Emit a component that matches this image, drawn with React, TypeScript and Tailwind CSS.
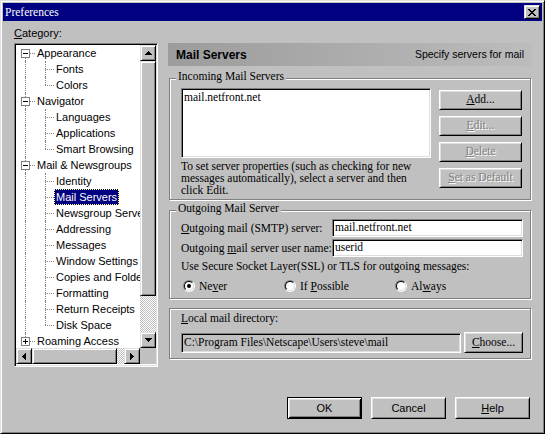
import React from 'react';

const sans = "font-['Liberation_Sans',Arial,sans-serif] text-[11px]";
const serif = "font-['Liberation_Serif','Times_New_Roman',serif] text-[11.5px]";

const raised =
    'border border-t-white border-l-white border-b-black border-r-black shadow-[inset_1px_1px_0_#dfdfdf,inset_-1px_-1px_0_#808080]';
const raisedDefault =
    'border border-black shadow-[inset_1px_1px_0_#fff,inset_-1px_-1px_0_#000,inset_2px_2px_0_#dfdfdf,inset_-2px_-2px_0_#808080]';
const sunken =
    'border border-t-[#808080] border-l-[#808080] border-b-white border-r-white shadow-[inset_1px_1px_0_#000,inset_-1px_-1px_0_#dfdfdf]';
const barBtn =
    'border border-t-[#dfdfdf] border-l-[#dfdfdf] border-b-black border-r-black shadow-[inset_1px_1px_0_#fff,inset_-1px_-1px_0_#808080]';

type Dir = 'up' | 'down' | 'left' | 'right';

function Arrow({ dir }: { dir: Dir }) {
    const vertical = dir === 'up' || dir === 'down';
    const rows = [1, 3, 5, 7];
    return (
        <svg width={vertical ? 7 : 4} height={vertical ? 4 : 7} shapeRendering="crispEdges">
            {rows.map((w, i) => {
                const off = (7 - w) / 2;
                if (dir === 'up') return <rect key={i} x={off} y={i} width={w} height={1} fill="#000" />;
                if (dir === 'down') return <rect key={i} x={off} y={3 - i} width={w} height={1} fill="#000" />;
                if (dir === 'left') return <rect key={i} x={i} y={off} width={1} height={w} fill="#000" />;
                return <rect key={i} x={3 - i} y={off} width={1} height={w} fill="#000" />;
            })}
        </svg>
    );
}

function ScrollButton({ dir }: { dir: Dir }) {
    return (
        <div className={`w-[16px] h-[16px] shrink-0 bg-[#c0c0c0] flex items-center justify-center ${barBtn}`}>
            <Arrow dir={dir} />
        </div>
    );
}

function Expander({ plus }: { plus?: boolean }) {
    return (
        <span className="w-[9px] h-[9px] border border-[#808080] bg-white flex items-center justify-center">
            <svg width="5" height="5" shapeRendering="crispEdges">
                <rect x="0" y="2" width="5" height="1" fill="#000" />
                {plus && <rect x="2" y="0" width="1" height="5" fill="#000" />}
            </svg>
        </span>
    );
}

type TreeItem = { label: string; root?: boolean; first?: boolean; last?: boolean; plus?: boolean; selected?: boolean };

const tree: TreeItem[] = [
    { label: 'Appearance', root: true, first: true },
    { label: 'Fonts' },
    { label: 'Colors', last: true },
    { label: 'Navigator', root: true },
    { label: 'Languages' },
    { label: 'Applications' },
    { label: 'Smart Browsing', last: true },
    { label: 'Mail & Newsgroups', root: true },
    { label: 'Identity' },
    { label: 'Mail Servers', selected: true },
    { label: 'Newsgroup Servers' },
    { label: 'Addressing' },
    { label: 'Messages' },
    { label: 'Window Settings' },
    { label: 'Copies and Folders' },
    { label: 'Formatting' },
    { label: 'Return Receipts' },
    { label: 'Disk Space', last: true },
    { label: 'Roaming Access', root: true, last: true, plus: true },
];

function TreeRow({ item }: { item: TreeItem }) {
    const label = item.selected ? (
        <div className="px-[1px] h-[16px] leading-[14px] whitespace-nowrap bg-[#000080] text-white border border-dotted border-[#ffff7f]">
            {item.label}
        </div>
    ) : (
        <div className="px-[2px] h-[16px] leading-[16px] whitespace-nowrap">{item.label}</div>
    );

    if (item.root) {
        return (
            <div className="h-[16px] flex">
                <div className="w-[19px] shrink-0 flex flex-col">
                    <div className={item.first ? 'h-[4px]' : 'ml-[9px] h-[4px] border-l border-dotted border-[#808080]'} />
                    <div className="h-[9px] flex items-center">
                        <div className="ml-[5px]">
                            <Expander plus={item.plus} />
                        </div>
                        <div className="w-[5px] border-t border-dotted border-[#808080]" />
                    </div>
                    <div className={item.last && item.plus ? 'flex-1' : 'ml-[9px] flex-1 border-l border-dotted border-[#808080]'} />
                </div>
                {label}
            </div>
        );
    }

    return (
        <div className="h-[16px] flex">
            <div className="w-[20px] shrink-0 pl-[9px]">
                <div className="h-full border-l border-dotted border-[#808080]" />
            </div>
            <div className="w-[18px] shrink-0 flex flex-col">
                <div className="ml-[9px] h-[8px] border-l border-dotted border-[#808080]" />
                <div className="ml-[9px] w-[9px] h-[1px] border-t border-dotted border-[#808080]" />
                <div className={item.last ? 'flex-1' : 'ml-[9px] flex-1 border-l border-dotted border-[#808080]'} />
            </div>
            {label}
        </div>
    );
}

function Button({
    children,
    className = '',
    disabled = false,
    isDefault = false,
}: {
    children: React.ReactNode;
    className?: string;
    disabled?: boolean;
    isDefault?: boolean;
}) {
    return (
        <button
            type="button"
            className={`bg-[#c0c0c0] flex items-center justify-center shrink-0 ${isDefault ? raisedDefault : raised} ${
                disabled ? 'text-[#808080] [text-shadow:1px_1px_0_#fff]' : 'text-black'
            } ${className}`}
        >
            {children}
        </button>
    );
}

function Radio({ checked }: { checked?: boolean }) {
    return (
        <span className="w-[12px] h-[12px] shrink-0 rounded-full border border-t-[#808080] border-l-[#808080] border-b-white border-r-white flex items-center justify-center">
            <span className="w-[10px] h-[10px] rounded-full border border-t-black border-l-black border-b-[#dfdfdf] border-r-[#dfdfdf] bg-white flex items-center justify-center">
                {checked && <span className="w-[4px] h-[4px] rounded-full bg-black" />}
            </span>
        </span>
    );
}

function Group({ label, className = '', children }: { label?: string; className?: string; children: React.ReactNode }) {
    return (
        <div className={`border border-[#808080] shadow-[inset_1px_1px_0_#fff,1px_1px_0_#fff] flex flex-col ${className}`}>
            {label && (
                <div className="-mt-[9px] ml-[6px] px-[2px] w-fit h-[12px] leading-[12px] bg-[#c0c0c0] whitespace-nowrap">
                    {label}
                </div>
            )}
            {children}
        </div>
    );
}

export default function App() {
    return (
        <div
            className={`w-[545px] h-[434px] bg-[#c0c0c0] p-[2px] flex flex-col text-black border border-t-[#dfdfdf] border-l-[#dfdfdf] border-b-black border-r-black shadow-[inset_1px_1px_0_#fff,inset_-1px_-1px_0_#808080] ${sans}`}
        >
            {/* Title bar */}
            <div className="h-[18px] shrink-0 bg-[#000080] flex items-center pl-[2px]">
                <span className={`text-white leading-[18px] ${serif}`}>Preferences</span>
                <div className={`ml-auto mr-[2px] w-[16px] h-[14px] bg-[#c0c0c0] flex items-center justify-center ${barBtn}`}>
                    <svg width="8" height="7" shapeRendering="crispEdges">
                        {[
                            [0, 0], [1, 0], [6, 0], [7, 0],
                            [1, 1], [2, 1], [5, 1], [6, 1],
                            [2, 2], [3, 2], [4, 2], [5, 2],
                            [3, 3], [4, 3],
                            [2, 4], [3, 4], [4, 4], [5, 4],
                            [1, 5], [2, 5], [5, 5], [6, 5],
                            [0, 6], [1, 6], [6, 6], [7, 6],
                        ].map(([x, y], i) => (
                            <rect key={i} x={x} y={y} width="1" height="1" fill="#000" />
                        ))}
                    </svg>
                </div>
            </div>

            <div className="flex pl-[11px]">
                {/* Left column: Category tree */}
                <div className="w-[144px] shrink-0 pt-[6px] flex flex-col">
                    <div className="h-[13px] leading-[13px]">
                        <u>C</u>ategory:
                    </div>
                    <div className={`mt-[3px] h-[324px] p-[1px] bg-white flex flex-col ${sunken}`}>
                        <div className="h-[303px] flex">
                            <div className="flex-1 overflow-hidden">
                                {tree.map((item) => (
                                    <TreeRow key={item.label} item={item} />
                                ))}
                            </div>
                            <div className="w-[16px] flex flex-col">
                                <ScrollButton dir="up" />
                                <div className={`h-[235px] shrink-0 bg-[#c0c0c0] ${barBtn}`} />
                                <div className="flex-1 bg-[repeating-conic-gradient(#fff_0_25%,#c0c0c0_0_50%)] bg-[length:2px_2px]" />
                                <ScrollButton dir="down" />
                            </div>
                        </div>
                        <div className="h-[16px] flex">
                            <div className="flex-1 flex">
                                <ScrollButton dir="left" />
                                <div className={`w-[85px] shrink-0 bg-[#c0c0c0] ${barBtn}`} />
                                <div className="flex-1 bg-[repeating-conic-gradient(#fff_0_25%,#c0c0c0_0_50%)] bg-[length:2px_2px]" />
                                <ScrollButton dir="right" />
                            </div>
                            <div className="w-[16px] bg-[#c0c0c0]" />
                        </div>
                    </div>
                </div>

                {/* Right column: Mail Servers panel */}
                <div className={`ml-[10px] w-[364px] pt-[22px] flex flex-col ${serif}`}>
                    <div className="h-[23px] flex items-center justify-between pl-[8px] pr-[8px] bg-linear-to-r from-[#9c9c9c] to-[#bcbcbc]">
                        <span className="font-['Liberation_Sans',Arial,sans-serif] text-[12px] font-bold">Mail Servers</span>
                        <span className="font-['Liberation_Sans',Arial,sans-serif] text-[10.5px]">Specify servers for mail</span>
                    </div>

                    <Group label="Incoming Mail Servers" className="mt-[12px] ml-[1px] w-[362px] pb-[3px]">
                        <div className="mt-[6px] pl-[11px] flex">
                            <div className="w-[250px] shrink-0 flex flex-col">
                                <div className={`h-[70px] bg-white pl-[2px] pt-[2px] leading-[12px] ${sunken}`}>
                                    mail.netfront.net
                                </div>
                                <div className="mt-[2px] leading-[12px] whitespace-nowrap">
                                    To set server properties (such as checking for new
                                    <br />
                                    messages automatically), select a server and then
                                    <br />
                                    click Edit.
                                </div>
                            </div>
                            <div className="ml-[8px] w-[83px] pt-[2px] flex flex-col gap-[6px]">
                                <Button className="h-[20px] w-[83px]">
                                    <span>
                                        <u>A</u>dd...
                                    </span>
                                </Button>
                                <Button className="h-[20px] w-[83px]" disabled>
                                    <span>
                                        <u>E</u>dit...
                                    </span>
                                </Button>
                                <Button className="h-[20px] w-[83px]" disabled>
                                    <span>
                                        <u>D</u>elete
                                    </span>
                                </Button>
                                <Button className="h-[20px] w-[83px]" disabled>
                                    <span>
                                        <u>S</u>et as Default
                                    </span>
                                </Button>
                            </div>
                        </div>
                    </Group>

                    <Group label="Outgoing Mail Server" className="mt-[10px] ml-[1px] w-[362px] pb-[6px]">
                        <div className="mt-[5px] pl-[11px] flex items-center h-[18px]">
                            <div className="w-[151px] leading-[12px] whitespace-nowrap">
                                <u>O</u>utgoing mail (SMTP) server:
                            </div>
                            <div className={`w-[191px] h-[18px] bg-white pl-[2px] leading-[14px] ${sunken}`}>mail.netfront.net</div>
                        </div>
                        <div className="mt-[2px] pl-[11px] flex items-center h-[18px]">
                            <div className="w-[151px] leading-[12px] whitespace-nowrap">
                                Outgoing <u>m</u>ail server user name:
                            </div>
                            <div className={`w-[191px] h-[18px] bg-white pl-[2px] leading-[14px] ${sunken}`}>userid</div>
                        </div>
                        <div className="mt-[3px] pl-[11px] leading-[12px] whitespace-nowrap">
                            Use Secure Socket Layer(SSL) or TLS for outgoing messages:
                        </div>
                        <div className="mt-[7px] pl-[13px] h-[13px] flex items-center leading-[12px]">
                            <div className="w-[101px] flex items-center gap-[4px]">
                                <Radio checked />
                                <span>
                                    Ne<u>v</u>er
                                </span>
                            </div>
                            <div className="w-[111px] flex items-center gap-[4px]">
                                <Radio />
                                <span>
                                    If <u>P</u>ossible
                                </span>
                            </div>
                            <div className="flex items-center gap-[4px]">
                                <Radio />
                                <span>
                                    Al<u>w</u>ays
                                </span>
                            </div>
                        </div>
                    </Group>

                    <Group className="mt-[9px] ml-[1px] w-[362px] pt-[3px] pb-[5px]">
                        <div className="pl-[11px] leading-[12px]">
                            <u>L</u>ocal mail directory:
                        </div>
                        <div className="mt-[8px] pl-[11px] flex items-start">
                            <div className={`mt-[1px] w-[280px] h-[20px] bg-[#c0c0c0] pl-[2px] leading-[16px] whitespace-nowrap ${sunken}`}>
                                C:\Program Files\Netscape\Users\steve\mail
                            </div>
                            <Button className="ml-[3px] w-[59px] h-[21px]">
                                <span>
                                    <u>C</u>hoose...
                                </span>
                            </Button>
                        </div>
                    </Group>
                </div>
            </div>

            {/* Dialog buttons */}
            <div className="mt-[30px] pr-[12px] flex justify-end gap-[9px]">
                <Button isDefault className="w-[75px] h-[22px]">
                    OK
                </Button>
                <Button className="w-[75px] h-[22px]">Cancel</Button>
                <Button className="w-[75px] h-[22px]">
                    <span>
                        <u>H</u>elp
                    </span>
                </Button>
            </div>
        </div>
    );
}
